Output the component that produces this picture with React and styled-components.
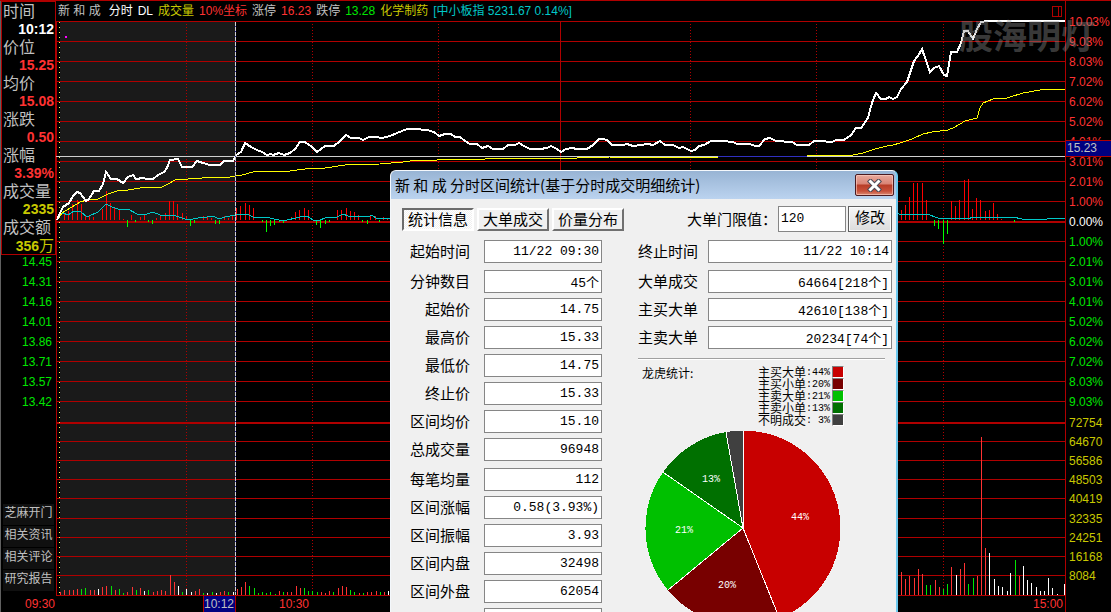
import React from 'react';
import styled, { createGlobalStyle } from 'styled-components';

const c = {
  line: '#b00000',
  red: '#ff3232',
  green: '#00e600',
  yellow: '#c8c800',
  cyan: '#00c8c8',
  grey: '#c0c0c0',
  white: '#ffffff',
};

const sans = '"Liberation Sans", "Noto Sans CJK SC", sans-serif';
const cjk = '"Noto Sans CJK SC", sans-serif';
const mono = '"Liberation Mono", "Noto Sans CJK SC", monospace';

const Global = createGlobalStyle`
  * { box-sizing: border-box; }
  body { margin: 0; background: #000; font-family: ${sans}; }
`;

/* ---------- page ---------- */

const Screen = styled.div`
  position: relative;
  display: grid;
  grid-template-columns: 56px minmax(0, 1fr) 45px;
  height: 100vh;
  overflow: hidden;
  background: #000;
  border-top: 1px solid ${c.line};
  font-size: 12px;
  color: ${c.grey};
`;

const Side = styled.aside`
  display: flex;
  flex-direction: column;
  height: 611px;
  border-left: 1px solid #606060;
`;

const Info = styled.dl`
  margin: 0;
  border: 1px solid ${c.line};
`;

const InfoLabel = styled.dt`
  height: 18px;
  padding-left: 1px;
  font: 16px/16px ${cjk};
`;

const InfoValue = styled.dd`
  height: 18px;
  margin: 0;
  padding-right: 1px;
  text-align: right;
  font: bold 14px/18px ${sans};
  color: ${(p) => p.$color};
`;

const Unit = styled.span`
  font: 15px/18px ${cjk};
`;

const PriceScale = styled.div`
  display: flex;
  flex-direction: column;
  gap: 8px;
  padding: 1px 4px 0 0;
  text-align: right;
  line-height: 12px;
  color: ${c.green};
`;

const Links = styled.nav`
  display: flex;
  flex-direction: column;
  gap: 1px;
  margin-top: auto;
  padding: 0 2px;
`;

const LinkButton = styled.button`
  height: 21px;
  padding: 0 0 6px;
  border: 0;
  background: #101010;
  color: ${c.grey};
  font: 12px/15px ${cjk};
`;

const StartTime = styled.div`
  height: 16px;
  margin-top: 5px;
  padding-right: 1px;
  text-align: right;
  line-height: 16px;
  color: ${c.red};
`;

const Center = styled.main`
  display: flex;
  flex-direction: column;
  border-right: 1px solid ${c.line};
  height: 611px;
`;

const Header = styled.header`
  display: flex;
  align-items: baseline;
  gap: 5px;
  height: 20px;
  padding: 0 3px 0 2px;
  line-height: 20px;
  white-space: nowrap;
`;

const HeadText = styled.span`
  color: ${(p) => p.$color};
  margin-right: ${(p) => (p.$wide ? '3px' : '0')};
`;

const PanelIcon = styled.svg`
  align-self: center;
  width: 10px;
  height: 11px;
  margin-left: auto;
`;

const Chart = styled.svg`
  display: block;
  width: 100%;
  height: 575px;
  overflow: visible;
`;

const TimeAxis = styled.div`
  display: grid;
  grid-template-columns: 147fr 33fr 73fr 756fr;
  height: 16px;
  line-height: 16px;
  color: ${c.red};
  text-align: right;
`;

const CursorTime = styled.span`
  grid-column: 2;
  padding-right: 1px;
  border: solid ${c.line};
  border-width: 0 1px;
  background: #000080;
  color: ${c.grey};
`;

const EndTime = styled.span`
  padding-right: 2px;
`;

const Scale = styled.aside`
  position: relative;
  padding: 11px 0 0 3px;
`;

const Percent = styled.div`
  height: 20px;
  line-height: 20px;
  color: ${(p) => p.$color};
`;

const Volumes = styled.div`
  display: flex;
  flex-direction: column;
  height: 173px;
  margin-top: 1px;
  color: ${c.yellow};
`;

const Volume = styled.div`
  display: flex;
  flex: 1;
  align-items: center;
`;

const CursorPrice = styled.div`
  position: absolute;
  top: 139px;
  left: 0;
  right: 0;
  height: 17px;
  padding-left: 1px;
  border: solid ${c.line};
  border-width: 1px 0;
  background: #000080;
  line-height: 15px;
`;

const Watermark = styled.div`
  position: absolute;
  top: 10px;
  right: 16px;
  font: bold 34px/48px ${cjk};
  color: rgba(140, 140, 140, 0.42);
  pointer-events: none;
`;

/* ---------- dialog ---------- */

const Dialog = styled.section`
  position: absolute;
  top: 169px;
  left: 390px;
  width: 508px;
  border: 1px solid #f4f8fc;
  border-right: 2px solid #6cc8ee;
  border-bottom: 0;
  border-radius: 6px 6px 0 0;
  background: #f0f0f0;
  color: #000;
  font: 15px/20px ${cjk};
  overflow: hidden;
`;

const TitleBar = styled.header`
  display: flex;
  justify-content: space-between;
  align-items: flex-start;
  height: 28px;
  padding: 3px 2px 0 4px;
  background: linear-gradient(#98b4d4, #bbd3ef);
`;

const Title = styled.h1`
  margin: 0;
  font: 15px/22px ${cjk};
  white-space: nowrap;
`;

const Close = styled.button`
  display: grid;
  place-items: center;
  width: 39px;
  height: 22px;
  padding: 0;
  border: 1px solid #4a1a20;
  border-radius: 2px;
  background: linear-gradient(#e8a99c 0%, #d98375 45%, #b73c27 50%, #c8503a 80%, #d98a74 100%);
  box-shadow: inset 0 0 0 1px rgba(255, 210, 200, 0.6);
`;

const Toolbar = styled.div`
  display: flex;
  align-items: center;
  height: 28px;
  margin: 6px 4px 7px 11px;
`;

const Tabs = styled.div`
  display: flex;
  gap: 3px;
`;

const Tab = styled.button`
  width: 72px;
  height: 23px;
  padding: 0;
  border: 2px solid;
  border-color: ${(p) => (p.$active ? '#6c6c6c #ffffff #ffffff #6c6c6c' : '#ffffff #707070 #707070 #ffffff')};
  background: ${(p) =>
    p.$active ? 'repeating-conic-gradient(#ffffff 0 25%, #f0f0f0 0 50%) 0 0 / 2px 2px' : '#f0f0f0'};
  font: 15px/18px ${cjk};
  color: #000;
`;

const Limit = styled.label`
  display: flex;
  align-items: center;
  margin-left: auto;
`;

const LimitInput = styled.input`
  width: 68px;
  height: 26px;
  margin-left: 1px;
  padding: 0 2px 2px;
  border: 1px solid #868686;
  background: #fff;
  font: 13px/22px ${mono};
  color: #000;
`;

const Modify = styled.button`
  width: 44px;
  height: 26px;
  margin-left: 2px;
  padding: 0 0 4px;
  border: 1px solid #606060;
  background: linear-gradient(#f6f6f6, #dcdcdc);
  box-shadow: inset 0 0 0 1px #fcfcfc;
  font: 15px/20px ${cjk};
  color: #000;
`;

const Columns = styled.div`
  display: grid;
  grid-template-columns: 200px 254px;
  justify-content: space-between;
  margin: 0 4px 8px 11px;
`;

const Groups = styled.div`
  display: flex;
  flex-direction: column;
  gap: 7px;
`;

const Group = styled.div`
  display: flex;
  flex-direction: column;
  gap: 5px;
`;

const Field = styled.label`
  display: grid;
  grid-template-columns: ${(p) => (p.$right ? '60px 184px' : '68px 118px')};
  justify-content: space-between;
  align-items: start;
  height: 23px;
  text-align: right;
  line-height: 21px;
`;

const FieldInput = styled.input`
  width: 100%;
  height: 23px;
  padding: 0 2px;
  border: 1px solid #868686;
  background: #fff;
  text-align: right;
  font: 13px/21px ${mono};
  color: #000;
`;

const Rule = styled.hr`
  width: 247px;
  height: 2px;
  margin: 9px 0 6px;
  border: 0;
  border-top: 1px solid #a0a0a0;
  background: #fff;
`;

const LegendArea = styled.div`
  display: flex;
  justify-content: space-between;
  margin: 0 48px 4px 4px;
  font: 12px/14px ${cjk};
`;

const LegendTable = styled.table`
  border-collapse: collapse;
  line-height: 12px;
  td {
    height: 12px;
    padding: 0;
    white-space: pre;
  }
  td + td {
    padding-top: 2px;
    font: 10px/10px ${mono};
  }
  td:last-child {
    padding: 0;
  }
`;

const Swatch = styled.div`
  width: 12px;
  height: 12px;
  margin-left: 2px;
  border: 1px solid;
  border-color: #808080 #fff #fff #808080;
  background: ${(p) => p.$color};
`;

const Pie = styled.svg`
  display: block;
  width: 196px;
  height: 196px;
  margin-left: 7px;
`;

/* ---------- data ---------- */

const price =
  '57,220 60,213 63,207 69,203 73,196 77,192 80,193 86,201 89,199 94,191 99,191 103,184 106,172 111,179 117,179 123,183 128,177 133,175 136,179 143,178 147,179 153,179 158,175 164,172 167,168 170,160 178,159 182,167 192,167 197,161 203,163 210,165 220,165 224,161 233,161 236,155 241,152 245,143 251,147 257,150 262,152 267,155 271,154 273,155 279,153 284,155 290,153 295,149 300,142 305,142 312,147 317,152 325,146 334,146 340,141 346,135 351,138 359,138 363,140 369,137 376,137 382,138 390,136 397,133 407,129 415,129 427,130 434,132 439,136 445,134 451,134 455,137 460,137 465,141 470,144 477,144 482,148 488,146 493,149 503,149 508,145 515,145 519,143 524,146 530,149 540,149 547,148 551,146 557,149 561,152 566,149 572,148 577,149 587,149 593,145 599,139 603,139 607,140 612,145 623,145 627,144 633,146 648,144 653,145 660,141 665,145 673,145 679,148 683,147 691,151 695,150 699,146 704,145 711,141 722,141 733,142 737,144 750,144 755,146 759,146 765,139 770,138 776,141 792,142 797,145 809,145 814,141 820,141 832,142 836,140 844,140 851,135 856,128 861,128 868,118 870,110 873,100 876,93 881,99 886,99 889,97 893,99 897,97 901,89 907,82 914,61 918,56 922,49 930,72 934,68 939,66 944,75 947,76 951,52 957,52 961,43 964,31 968,31 973,39 977,29 981,22 987,21 1065,21';

const averageStart =
  '57,220 62,213 72,207 80,202 87,200 98,199 108,194 117,191 128,190 140,188 162,187 168,184 175,180 188,179 202,178 230,177 242,175 253,172 273,171 290,171 305,169 325,168 345,165 380,164 403,162 418,160 437,160 448,159 485,159 490,158 577,158 610,157 718,157';
const averageEnd =
  '807,155 853,155 863,153 875,149 887,146 893,145 900,143 912,139 923,134 932,132 948,130 955,127 965,121 977,118 980,108 983,103 993,99 1007,98 1023,93 1040,90 1052,89 1065,89';
const cyanLine =
  '57,218 63,213 68,215 74,211 80,211 87,217 98,212 106,204 112,207 118,209 128,209 137,214 147,214 153,212 160,215 173,215 182,218 188,220 198,218 207,217 213,216 219,219 225,217 235,215 247,214 253,217 270,218 283,221 300,217 307,216 313,220 320,220 325,218 337,217 343,214 348,216 368,217 372,215 376,218 390,218 899,214 920,215 927,214 938,218 965,219 976,217 1013,217 1022,219 1047,219 1052,218 1065,218';

// [x, tip y] of the strength bars on either side of the zero line
const strength = [
  [64, 213], [68, 211], [72, 204], [77, 200], [81, 204], [85, 215], [89, 216], [93, 217], [102, 209], [106, 191],
  [110, 203], [114, 207], [119, 209], [123, 219], [127, 227], [131, 215], [135, 222], [140, 217], [144, 215],
  [148, 222], [152, 224], [156, 218], [160, 216], [165, 213], [169, 201], [173, 201], [177, 204], [182, 213],
  [186, 216], [190, 226], [194, 223], [203, 216], [207, 216], [211, 218], [215, 224], [219, 224], [224, 216],
  [228, 218], [232, 216], [236, 208], [240, 206], [245, 203], [249, 205], [253, 208], [262, 222], [266, 232],
  [270, 226], [274, 225], [279, 222], [283, 223], [291, 217], [295, 212], [299, 210], [304, 208], [308, 210],
  [316, 225], [320, 228], [325, 224], [329, 222], [337, 210], [341, 210], [346, 208], [350, 211], [354, 212],
  [358, 215], [362, 222], [367, 224], [370, 215], [375, 216], [379, 222], [383, 217], [387, 218], [901, 210],
  [905, 205], [909, 197], [913, 183], [917, 183], [922, 183], [926, 200], [934, 226], [938, 229], [943, 244],
  [947, 234], [951, 201], [955, 206], [959, 200], [964, 180], [968, 179], [972, 209], [976, 198], [980, 200],
  [985, 211], [989, 210], [993, 203], [997, 214], [1001, 219], [1014, 222],
];

// "x height colour" of the traded volume bars
const volumes = (
  '60 3r 64 5r 69 5r 73 5r 77 6r 81 6g 85 7g 90 5r 94 5r 98 6w 102 8r 106 9r 111 9g 115 5r 119 6g 123 2g 127 3r ' +
  '132 8r 136 5g 140 7r 144 4w 148 5g 153 3r 157 4r 161 5r 165 4r 170 20r 174 13r 178 9w 182 3g 186 6w 191 3w ' +
  '195 4r 199 6r 203 2g 207 2w 212 3g 216 2w 220 3r 224 4r 228 3g 233 3w 237 6r 241 8r 245 13r 249 9g 254 7g ' +
  '258 2g 262 3g 266 2g 270 3g 275 1g 279 4r 283 3g 287 3r 291 3r 296 9r 300 7r 304 7g 308 4g 312 4g 317 3g ' +
  '321 3r 325 2r 329 4r 333 3g 338 7r 342 9r 346 8r 350 5g 354 3g 359 2r 363 2g 367 3r 371 3r 376 4r 380 3g ' +
  '384 3r 388 4w 901 23r 905 16r 909 19r 914 17r 918 26r 922 21r 926 10g 930 10g 935 15r 939 8r 943 6g 947 11g ' +
  '951 28r 956 20w 960 26r 964 32r 968 11g 973 17g 977 19r 981 158r 985 47r 989 42w 994 16w 998 9w 1002 8w ' +
  '1007 4w 1010 22w 1015 35g 1019 19r 1023 29w 1027 15w 1031 12w 1036 8w 1040 4w 1044 4w 1048 17w 1052 7w 1057 1w 1064 11w'
)
  .match(/\d+ \d+[rgw]/g)
  .map((s) => {
    const [x, h] = s.split(' ');
    return [Number(x), parseInt(h, 10), { r: c.red, g: c.green, w: c.white }[h.slice(-1)]];
  });

const gridRows = [41, 61, 81, 101, 121, 141, 161, 181, 201, 241, 261, 281, 301, 321, 341, 361, 381, 401, 441, 460, 479, 498, 518, 537, 556, 575];
const dottedCols = [186, 312, 438, 690, 816, 943];

const info = [
  ['时间', '10:12', c.white],
  ['价位', '15.25', c.red],
  ['均价', '15.08', c.red],
  ['涨跌', '0.50', c.red],
  ['涨幅', '3.39%', c.red],
  ['成交量', '2335', c.yellow],
  ['成交额', '356', c.yellow, '万'],
];

const header = [
  ['新 和 成', c.grey, true],
  ['分时', c.white],
  ['DL', c.white],
  ['成交量', c.yellow],
  ['10%坐标', c.red],
  ['涨停', c.grey],
  ['16.23', c.red],
  ['跌停', c.grey],
  ['13.28', c.green],
  ['化学制药', c.yellow],
  ['[中小板指 5231.67 0.14%]', c.cyan],
];

const prices = ['14.45', '14.31', '14.16', '14.01', '13.86', '13.71', '13.57', '13.42'];
const links = ['芝麻开门', '相关资讯', '相关评论', '研究报告'];
const ups = ['10.03%', '9.03%', '8.03%', '7.02%', '6.02%', '5.02%', '4.01%', '3.01%', '2.01%', '1.00%'];
const downs = ['1.00%', '2.01%', '3.01%', '4.01%', '5.02%', '6.02%', '7.02%', '8.03%', '9.03%'];
const volumeScale = ['72754', '64670', '56586', '48503', '40419', '32335', '24251', '16168', '8084'];

const leftGroups = [
  [['起始时间', '11/22 09:30']],
  [
    ['分钟数目', '45个'],
    ['起始价', '14.75'],
    ['最高价', '15.33'],
    ['最低价', '14.75'],
    ['终止价', '15.33'],
    ['区间均价', '15.10'],
    ['总成交量', '96948'],
  ],
  [
    ['每笔均量', '112'],
    ['区间涨幅', '0.58(3.93%)'],
    ['区间振幅', '3.93'],
    ['区间内盘', '32498'],
    ['区间外盘', '62054'],
    ['', ''],
  ],
];

const rightGroups = [
  [['终止时间', '11/22 10:14']],
  [
    ['大单成交', '64664[218个]'],
    ['主买大单', '42610[138个]'],
    ['主卖大单', '20234[74个]'],
  ],
];

const slices = [
  { name: '主买大单', share: '44%', color: '#c80000', from: 0, to: 0.439, x: 155, y: 90 },
  { name: '主买小单', share: '20%', color: '#780000', from: 0.439, to: 0.64, x: 82, y: 158 },
  { name: '主卖大单', share: '21%', color: '#00c000', from: 0.64, to: 0.847, x: 39, y: 103 },
  { name: '主卖小单', share: '13%', color: '#007000', from: 0.847, to: 0.972, x: 66, y: 52 },
  { name: '不明成交', share: ' 3%', color: '#404040', from: 0.972, to: 1 },
];

const rim = (t) => {
  const a = t * 2 * Math.PI;
  return `${98 + 97.5 * Math.sin(a)} ${98 - 97.5 * Math.cos(a)}`;
};

/* ---------- parts ---------- */

function IntradayChart() {
  return (
    <Chart viewBox="56 21 1009 575" preserveAspectRatio="none" shapeRendering="crispEdges" role="img" aria-label="分时走势">
      <rect x="60" y="22" width="175" height="573" fill="#1a1a1a" />
      <g fill={c.line}>
        <rect x="56" y="21" width="1009" height="1" />
        {gridRows.map((y) => (
          <rect key={y} x="56" y={y} width="1009" height="1" />
        ))}
        <rect x="56" y="221" width="1009" height="2" />
        <rect x="56" y="422" width="1009" height="2" />
        <rect x="56" y="595" width="1009" height="1" />
        <rect x="56" y="21" width="1" height="575" />
        <rect x="560" y="21" width="1" height="575" />
      </g>
      {dottedCols.map((x) => (
        <line key={x} x1={x + 0.5} x2={x + 0.5} y1="24" y2="595" stroke={c.line} strokeDasharray="1 2" />
      ))}
      <line x1="59.5" x2="59.5" y1="22" y2="595" stroke="#ffff60" strokeDasharray="1 4" />
      {strength.map(([x, y]) => (
        <rect
          key={x}
          x={x}
          y={y < 220 ? y : 220}
          width="1"
          height={Math.abs(220 - y)}
          fill={y < 220 ? '#ff0000' : '#00ff00'}
        />
      ))}
      {volumes.map(([x, h, color]) => (
        <rect key={x} x={x} y={595 - h} width="1" height={h} fill={color} />
      ))}
      <g fill="none">
        <polyline points={cyanLine} stroke={c.cyan} />
        <rect x="56" y="156" width="1009" height="1" fill="#d0d0d0" />
        <rect x="718" y="156" width="89" height="1" fill="#3030c0" />
        <polyline points={averageStart} stroke="#ffff00" />
        <polyline points={averageEnd} stroke="#ffff00" />
        <polyline points={price} stroke="#ffffff" strokeWidth="2" />
      </g>
      <rect x="235" y="22" width="1" height="573" fill="#2020a0" />
      <line x1="235.5" x2="235.5" y1="22" y2="595" stroke="#d0d0d0" strokeDasharray="4 1" />
      <rect x="65" y="36" width="2" height="2" fill="#ff00ff" />
    </Chart>
  );
}

function Fields({ groups, right }) {
  return (
    <Groups>
      {groups.map((group, i) => (
        <Group key={i}>
          {group.map(([label, value], n) => (
            <Field key={n} $right={right}>
              <span>{label}</span>
              <FieldInput readOnly defaultValue={value} />
            </Field>
          ))}
        </Group>
      ))}
    </Groups>
  );
}

function StatsDialog() {
  return (
    <Dialog role="dialog" aria-labelledby="stats-title">
      <TitleBar>
        <Title id="stats-title">新 和 成 分时区间统计(基于分时成交明细统计)</Title>
        <Close type="button" aria-label="关闭">
          <svg width="15" height="13" viewBox="0 0 15 13">
            <path d="M3.5 2.5 L11.5 10.5 M11.5 2.5 L3.5 10.5" stroke="#4a4a58" strokeWidth="5" strokeLinecap="square" />
            <path d="M3.5 2.5 L11.5 10.5 M11.5 2.5 L3.5 10.5" stroke="#fff" strokeWidth="3" strokeLinecap="square" />
          </svg>
        </Close>
      </TitleBar>
      <Toolbar>
        <Tabs role="tablist">
          <Tab type="button" role="tab" aria-selected="true" $active>统计信息</Tab>
          <Tab type="button" role="tab" aria-selected="false">大单成交</Tab>
          <Tab type="button" role="tab" aria-selected="false">价量分布</Tab>
        </Tabs>
        <Limit>
          大单门限值：
          <LimitInput defaultValue="120" />
        </Limit>
        <Modify type="button">修改</Modify>
      </Toolbar>
      <Columns>
        <Fields groups={leftGroups} />
        <div>
          <Fields groups={rightGroups} right />
          <Rule />
          <LegendArea>
            <span>龙虎统计:</span>
            <LegendTable>
              <tbody>
                {slices.map((s) => (
                  <tr key={s.name}>
                    <td>{s.name}</td>
                    <td>:{s.share}</td>
                    <td>
                      <Swatch $color={s.color} />
                    </td>
                  </tr>
                ))}
              </tbody>
            </LegendTable>
          </LegendArea>
          <Pie viewBox="0 0 196 196" role="img" aria-label="龙虎统计">
            {slices.map((s) => (
              <path
                key={s.name}
                d={`M98 98 L${rim(s.from)} A97.5 97.5 0 0 1 ${s.to === 1 ? '98 0.5' : rim(s.to)} Z`}
                fill={s.color}
                shapeRendering="crispEdges"
              />
            ))}
            {slices.map((s) => (
              <path key={s.name} d={`M98 98 L${rim(s.from)}`} stroke="#fff" shapeRendering="crispEdges" />
            ))}
            {slices
              .filter((s) => s.x)
              .map((s) => (
                <text key={s.name} x={s.x} y={s.y} fill="#fff" textAnchor="middle" fontSize="10" fontFamily="Liberation Mono, monospace">
                  {s.share}
                </text>
              ))}
          </Pie>
        </div>
      </Columns>
    </Dialog>
  );
}

export default function App() {
  return (
    <>
      <Global />
      <Screen>
        <Side>
          <Info>
            {info.map(([label, value, color, unit]) => (
              <React.Fragment key={label}>
                <InfoLabel>{label}</InfoLabel>
                <InfoValue $color={color}>
                  {value}
                  {unit && <Unit>{unit}</Unit>}
                </InfoValue>
              </React.Fragment>
            ))}
          </Info>
          <PriceScale>
            {prices.map((p) => (
              <span key={p}>{p}</span>
            ))}
          </PriceScale>
          <Links>
            {links.map((l) => (
              <LinkButton key={l} type="button">{l}</LinkButton>
            ))}
          </Links>
          <StartTime>09:30</StartTime>
        </Side>
        <Center>
          <Header>
            {header.map(([text, color, wide]) => (
              <HeadText key={text} $color={color} $wide={wide}>{text}</HeadText>
            ))}
            <PanelIcon viewBox="0 0 10 11" shapeRendering="crispEdges" fill="none" stroke={c.line}>
              <path d="M0.5 0.5 H9.5 V10.5 H0.5 Z M6.5 0.5 V10.5" />
            </PanelIcon>
          </Header>
          <IntradayChart />
          <TimeAxis>
            <CursorTime>10:12</CursorTime>
            <span>10:30</span>
            <EndTime>15:00</EndTime>
          </TimeAxis>
        </Center>
        <Scale>
          {ups.map((v) => (
            <Percent key={v} $color={c.red}>{v}</Percent>
          ))}
          <Percent $color={c.white}>0.00%</Percent>
          {downs.map((v) => (
            <Percent key={v} $color={c.green}>{v}</Percent>
          ))}
          <Volumes>
            {volumeScale.map((v) => (
              <Volume key={v}>{v}</Volume>
            ))}
          </Volumes>
          <CursorPrice>15.23</CursorPrice>
        </Scale>
        <Watermark>股海明灯</Watermark>
        <StatsDialog />
      </Screen>
    </>
  );
}
